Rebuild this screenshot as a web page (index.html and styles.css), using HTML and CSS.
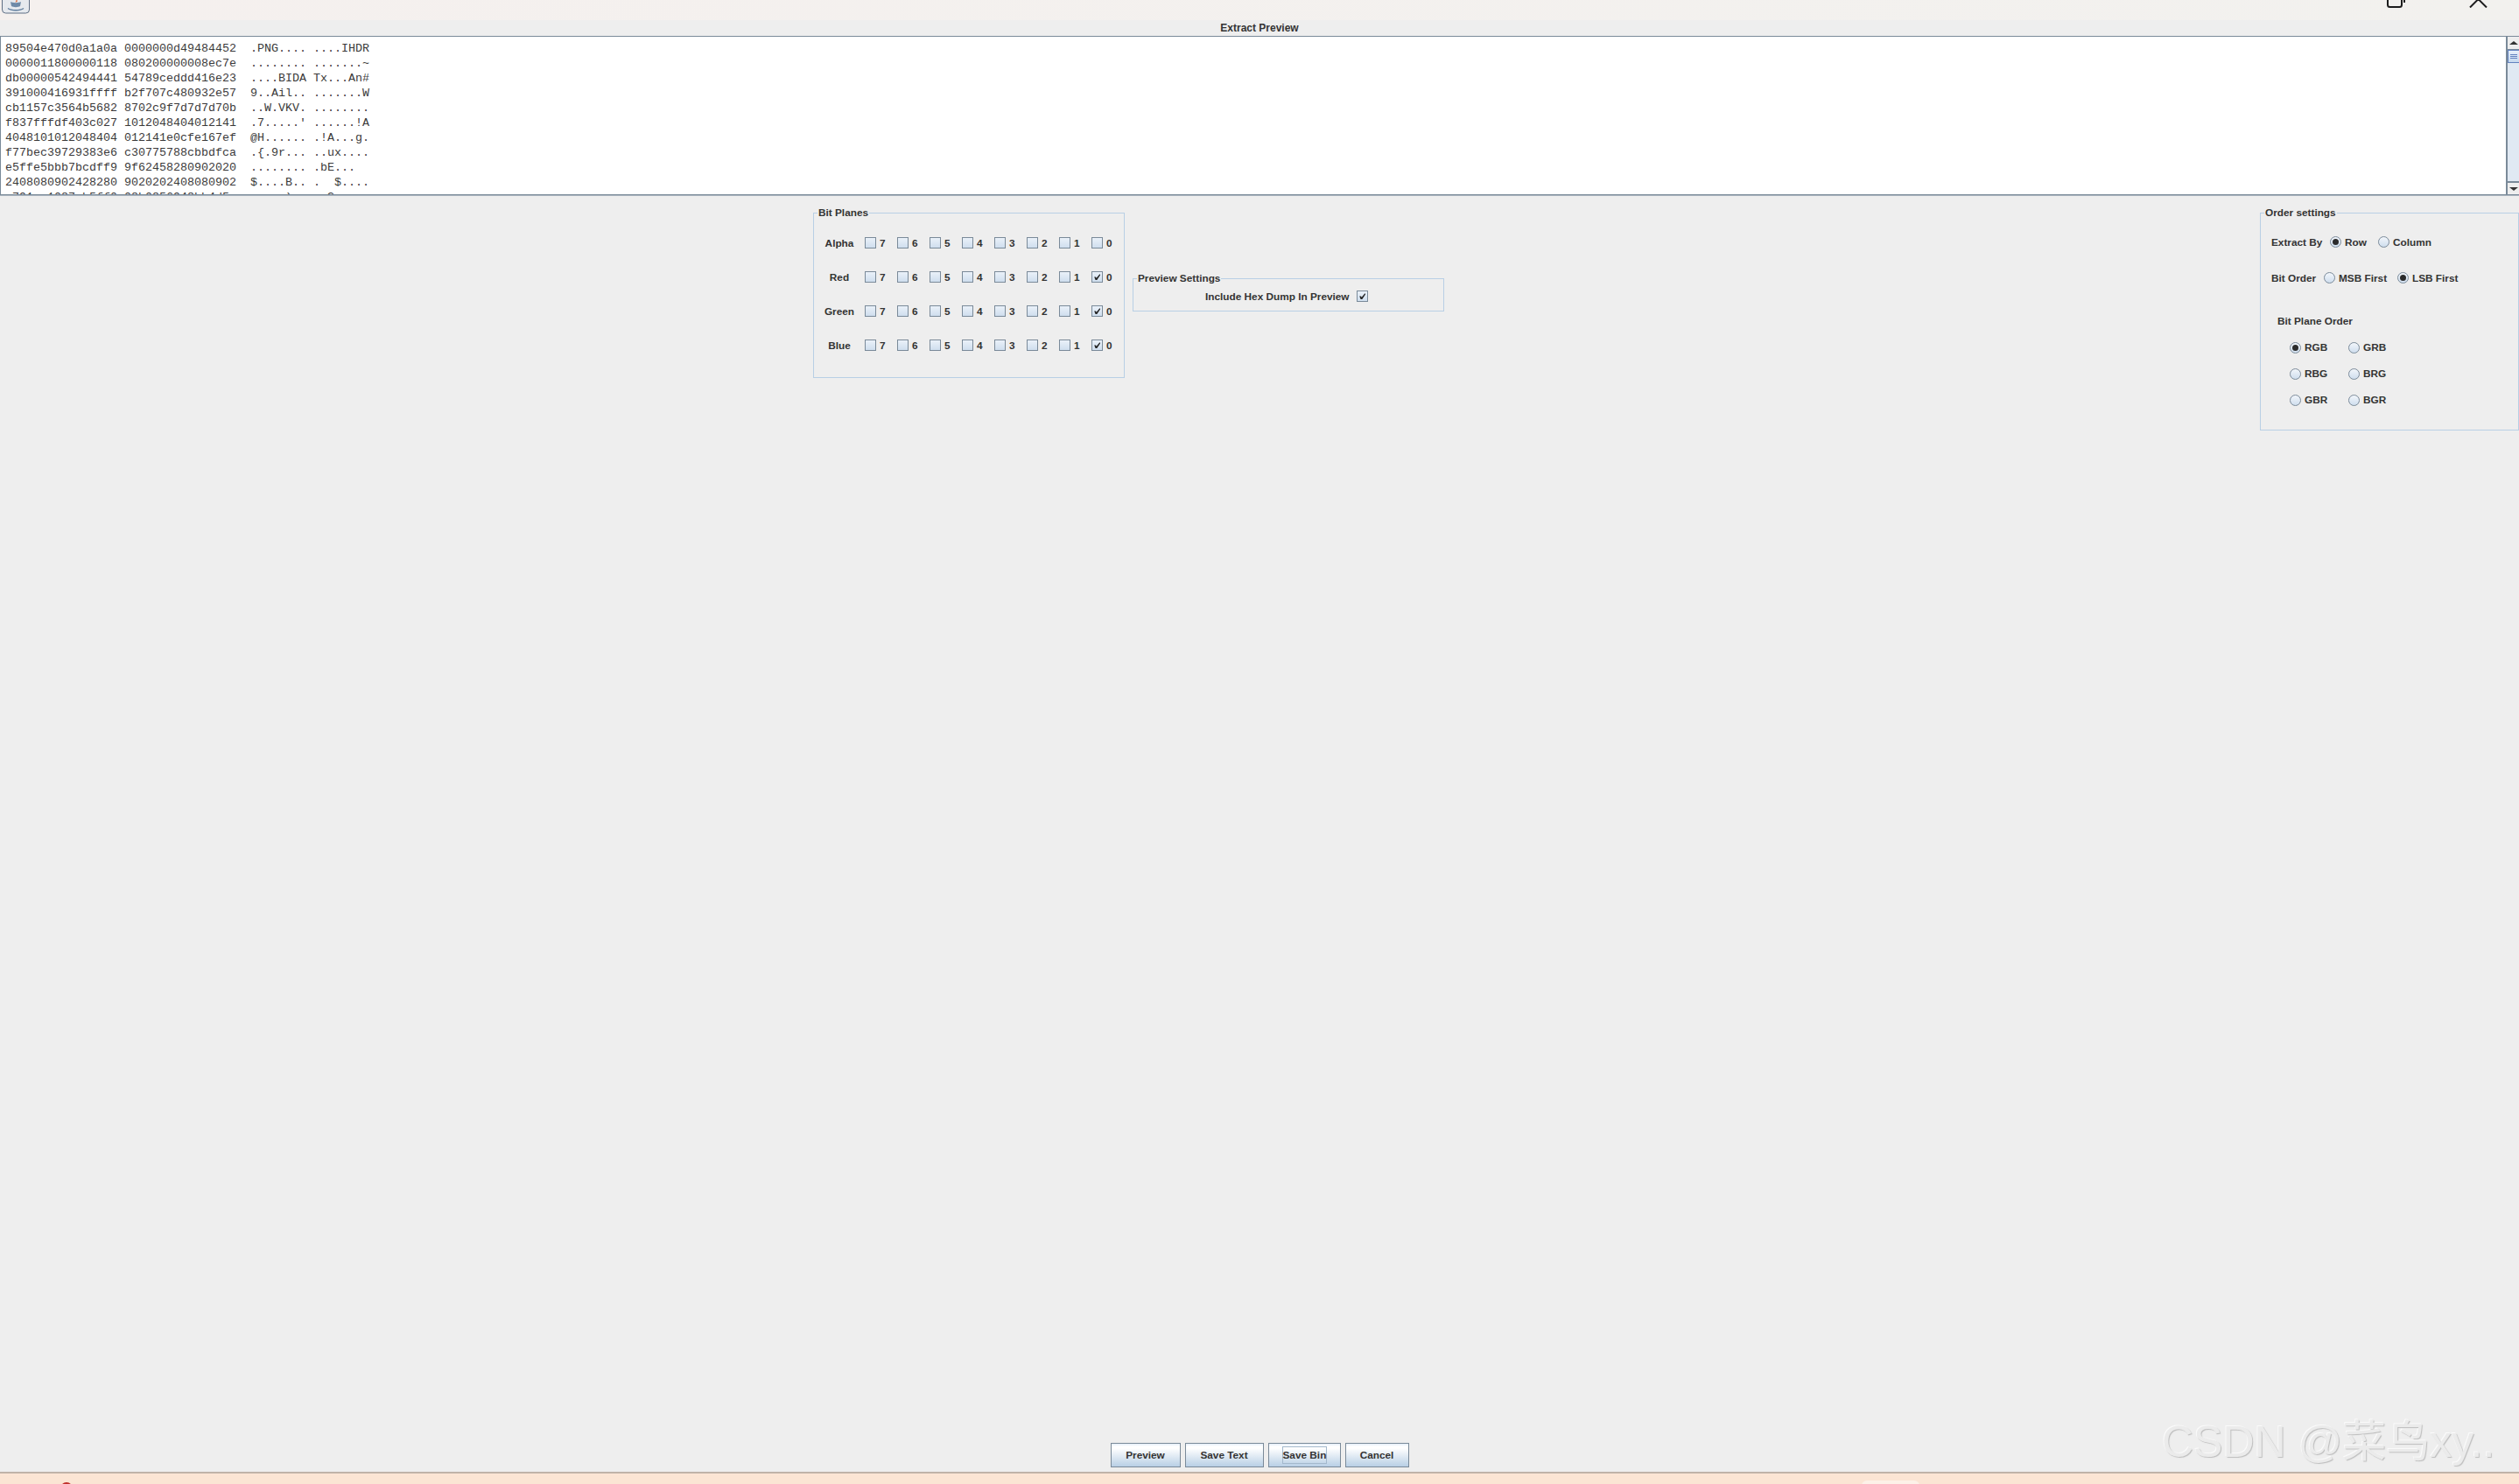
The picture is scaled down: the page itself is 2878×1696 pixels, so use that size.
FILE: index.html
```html
<!DOCTYPE html>
<html lang="en">
<head>
<meta charset="utf-8">
<title>Extract Preview</title>
<link rel="stylesheet" href="styles.css">
</head>
<body>
<svg class="defs" width="0" height="0" aria-hidden="true">
  <symbol id="tick" viewBox="0 0 13 13"><path d="M3.2 6.4 L5 6.4 L5.7 7.8 L9.2 3.6 L10 3.6 L10 4.6 L6.3 10 L4.6 10 Z" fill="#222"/></symbol>
</svg>
<div class="window">
  <header class="titlebar">
    <svg class="java-icon" width="36" height="16" viewBox="0 0 36 16">
      <rect x="2.5" y="-8" width="31" height="23" rx="4" fill="#e6e9ee" stroke="#5f6f85" stroke-width="1"/>
      <path d="M12 2 C14 3.5 22 3.5 24 2 L23 7 C21 8.5 15 8.5 13 7 Z" fill="#6f8aa8"/>
      <path d="M9 9.5 C13 12.5 23 12.5 27 9.5" fill="none" stroke="#5f7c9c" stroke-width="1.4"/>
      <path d="M19 -1 L20 1.5 L17.5 3 Z" fill="#d8693c"/>
    </svg>
    <div class="window-controls">
      <svg width="22" height="9" viewBox="0 0 22 9"><path d="M1 -4 V5.5 Q1 8 3.5 8 H14.5 Q17 8 17 5.5 V-4 M20 -4 V3" fill="none" stroke="#1c1c1c" stroke-width="2"/></svg>
      <svg class="close-icon" width="21" height="9" viewBox="0 0 21 9"><path d="M10.5 -1 L1 8.5 M10.5 -1 L20 8.5" fill="none" stroke="#1c1c1c" stroke-width="2"/></svg>
    </div>
  </header>
  <div class="caption">Extract Preview</div>
  <section class="preview">
    <pre class="dump">89504e470d0a1a0a 0000000d49484452  .PNG.... ....IHDR
0000011800000118 080200000008ec7e  ........ .......~
db00000542494441 54789ceddd416e23  ....BIDA Tx...An#
391000416931ffff b2f707c480932e57  9..Ail.. .......W
cb1157c3564b5682 8702c9f7d7d7d70b  ..W.VKV. ........
f837fffdf403c027 1012048404012141  .7.....' ......!A
4048101012048404 012141e0cfe167ef  @H...... .!A...g.
f77bec39729383e6 c30775788cbbdfca  .{.9r... ..ux....
e5ffe5bbb7bcdff9 9f62458280902020  ........ .bE...
2408080902428280 9020202408080902  $....B.. .  $....
a791ee1087cb5ff0 08b0856948bb4d5e  .....).. ..?.....</pre>
    <div class="scrollbar">
      <div class="sb-btn"><span class="arrow-up"></span></div>
      <div class="sb-thumb"><i></i><i></i><i></i></div>
      <div class="sb-track"></div>
      <div class="sb-btn sb-btn-down"><span class="arrow-down"></span></div>
    </div>
  </section>

  <main class="settings">
    <fieldset class="group bit-planes">
      <legend>Bit Planes</legend>
      <div class="plane-row"><span class="plane-name">Alpha</span>
        <span class="bit"><span class="check"></span>7</span><span class="bit"><span class="check"></span>6</span><span class="bit"><span class="check"></span>5</span><span class="bit"><span class="check"></span>4</span><span class="bit"><span class="check"></span>3</span><span class="bit"><span class="check"></span>2</span><span class="bit"><span class="check"></span>1</span><span class="bit"><span class="check"></span>0</span>
      </div>
      <div class="plane-row"><span class="plane-name">Red</span>
        <span class="bit"><span class="check"></span>7</span><span class="bit"><span class="check"></span>6</span><span class="bit"><span class="check"></span>5</span><span class="bit"><span class="check"></span>4</span><span class="bit"><span class="check"></span>3</span><span class="bit"><span class="check"></span>2</span><span class="bit"><span class="check"></span>1</span><span class="bit"><span class="check"><svg><use href="#tick"/></svg></span>0</span>
      </div>
      <div class="plane-row"><span class="plane-name">Green</span>
        <span class="bit"><span class="check"></span>7</span><span class="bit"><span class="check"></span>6</span><span class="bit"><span class="check"></span>5</span><span class="bit"><span class="check"></span>4</span><span class="bit"><span class="check"></span>3</span><span class="bit"><span class="check"></span>2</span><span class="bit"><span class="check"></span>1</span><span class="bit"><span class="check"><svg><use href="#tick"/></svg></span>0</span>
      </div>
      <div class="plane-row"><span class="plane-name">Blue</span>
        <span class="bit"><span class="check"></span>7</span><span class="bit"><span class="check"></span>6</span><span class="bit"><span class="check"></span>5</span><span class="bit"><span class="check"></span>4</span><span class="bit"><span class="check"></span>3</span><span class="bit"><span class="check"></span>2</span><span class="bit"><span class="check"></span>1</span><span class="bit"><span class="check"><svg><use href="#tick"/></svg></span>0</span>
      </div>
    </fieldset>

    <fieldset class="group preview-settings">
      <legend>Preview Settings</legend>
      <div class="hex-row">Include Hex Dump In Preview<span class="check"><svg><use href="#tick"/></svg></span></div>
    </fieldset>

    <fieldset class="group order-settings">
      <legend>Order settings</legend>
      <div class="order-body">
        <div class="order-row extract-row">
          <span class="order-label">Extract By</span>
          <span class="opt opt-row"><span class="radio on"></span>Row</span>
          <span class="opt"><span class="radio"></span>Column</span>
        </div>
        <div class="order-row bitorder-row">
          <span class="order-label">Bit Order</span>
          <span class="opt opt-msb"><span class="radio"></span>MSB First</span>
          <span class="opt"><span class="radio on"></span>LSB First</span>
        </div>
        <div class="plane-order-title">Bit Plane Order</div>
        <div class="plane-order-grid">
          <span class="opt"><span class="radio on"></span>RGB</span>
          <span class="opt"><span class="radio"></span>GRB</span>
          <span class="opt"><span class="radio"></span>RBG</span>
          <span class="opt"><span class="radio"></span>BRG</span>
          <span class="opt"><span class="radio"></span>GBR</span>
          <span class="opt"><span class="radio"></span>BGR</span>
        </div>
      </div>
    </fieldset>
  </main>

  <footer class="actions">
    <button class="btn btn-preview">Preview</button>
    <button class="btn btn-text">Save Text</button>
    <button class="btn btn-bin"><span class="focus">Save Bin</span></button>
    <button class="btn btn-cancel">Cancel</button>
    <div class="watermark">CSDN @菜鸟xy..</div>
  </footer>
  <div class="taskbar">
    <span class="red-dot"></span>
    <span class="pill"></span>
  </div>
</div>
</body>
</html>
```
FILE: styles.css
```css
* { box-sizing: border-box; }
html, body { margin: 0; height: 100%; overflow: hidden; }
body { background: #eeeeee; color: #333; font: bold 11.8px "Liberation Sans", Arial, sans-serif; }
.defs { position: absolute; }
.window { display: flex; flex-direction: column; height: 1696px; width: 2878px; }

.titlebar { height: 23px; flex: none; background: linear-gradient(90deg, #f5f0ee, #f2f1ee); display: flex; justify-content: space-between; align-items: flex-start; overflow: hidden; }
.java-icon { display: block; }
.window-controls { display: flex; align-items: flex-start; gap: 72px; padding-right: 36px; }
.window-controls svg { display: block; }

.caption { height: 18px; flex: none; text-align: center; line-height: 18px; font-size: 12px; background: #eeeeee; }

.preview { height: 182px; flex: none; display: flex; border-top: 1px solid #7a8a99; border-bottom: 1px solid #7a8a99; box-shadow: 0 1px 0 #aab4be; background: #fff; border-left: 1px solid #7a8a99; overflow: hidden; }
.dump { flex: 1; margin: 0; padding: 5px 0 0 5px; font: 13.33px/17px "Liberation Mono", "Courier New", monospace; color: #3a3a3a; overflow: hidden; white-space: pre; }
.scrollbar { width: 15px; flex: none; display: flex; flex-direction: column; background: #e0e9f3; border-left: 2px solid #7a8a99; }
.sb-btn { height: 15px; flex: none; background: #eeeeee; display: flex; align-items: center; justify-content: center; border-bottom: 1px solid #7a8a99; }
.sb-btn-down { border-bottom: 0; border-top: 2px solid #7a8a99; }
.arrow-up { border: 4px solid transparent; border-top: 0; border-bottom: 4px solid #333; border-left-width: 5px; border-right-width: 5px; }
.arrow-down { border: 4px solid transparent; border-bottom: 0; border-top: 4px solid #333; border-left-width: 5px; border-right-width: 5px; }
.sb-thumb { height: 15px; flex: none; background: linear-gradient(#e6effa, #c5d9ef); border: 1px solid #6382bf; border-right: 0; display: flex; flex-direction: column; justify-content: center; gap: 1px; padding: 0 2px; }
.sb-thumb i { height: 1px; background: #6382bf; display: block; }
.sb-track { flex: 1; }

.settings { flex: 1; display: flex; align-items: flex-start; padding-top: 13px; position: relative; }
.group { margin: 0; padding: 0; border: 1px solid #b8cfe5; min-width: 0; }
.group legend { padding: 0 1px; margin-left: 4px; line-height: 14px; height: 14px; }

.bit-planes { margin-left: 929px; width: 356px; height: 196px; padding: 8px 0 0 0; }
.plane-row { display: flex; align-items: center; height: 39px; }
.plane-name { width: 58px; text-align: center; }
.bit { width: 37px; display: flex; align-items: center; gap: 4px; }
.check { width: 13px; height: 13px; flex: none; display: block; border: 1px solid #7a8a99; background: linear-gradient(#eaf1f9, #cfdeee); position: relative; }
.check svg { position: absolute; left: -1px; top: -1px; width: 13px; height: 13px; display: block; }

.preview-settings { margin-left: 9px; margin-top: 75px; width: 356px; height: 45px; }
.hex-row { display: flex; align-items: center; height: 27px; padding-left: 82px; gap: 8px; }

.order-settings { margin-left: auto; width: 296px; height: 256px; }
.order-body { padding-left: 12px; }
.order-row { display: flex; align-items: center; }
.extract-row { height: 41px; margin-top: 6px; }
.bitorder-row { height: 41px; }
.order-label { width: 67px; }
.bitorder-row .order-label { width: 60px; }
.opt { display: flex; align-items: center; gap: 4px; }
.opt-row { width: 55px; }
.opt-msb { width: 84px; }
.radio { width: 13px; height: 13px; flex: none; border: 1px solid #7a8a99; border-radius: 50%; background: linear-gradient(#f2f6fb, #cfdeee); display: flex; align-items: center; justify-content: center; }
.radio.on::after { content: ""; width: 7px; height: 7px; border-radius: 50%; background: #2b2b2b; }
.plane-order-title { margin: 22px 0 0 7px; line-height: 14px; }
.plane-order-grid { display: grid; grid-template-columns: 67px 67px; grid-auto-rows: 30px; margin: 8px 0 0 21px; }

.actions { height: 38px; flex: none; display: flex; justify-content: center; gap: 5px; padding-top: 5px; position: relative; }
.btn { height: 28px; padding: 0; font: inherit; color: #333; border: 1px solid #7a8a99; background: linear-gradient(#e4eef9 0, #fff 12%, #ffffff 20%, #b8cfe5 100%); }
.btn-preview { width: 80px; }
.btn-text { width: 90px; }
.btn-bin { width: 83px; }
.btn-cancel { width: 73px; }
.focus { display: inline-block; width: 51px; height: 20px; line-height: 18px; border: 1px solid #a3b8cc; white-space: nowrap; }

.watermark { position: absolute; left: 2470px; top: -26px; font: 400 50px/60px "Liberation Sans", "Noto Sans CJK SC", sans-serif; color: #ebebeb; white-space: nowrap; text-shadow: 1px 1px 1px #bdbdbd, -1px -1px 0 #fafafa; }

.taskbar { height: 14px; flex: none; background: #fbe5d4; border-top: 2px solid #bfb3a8; position: relative; overflow: hidden; }
.red-dot { position: absolute; left: 69px; top: 10px; width: 14px; height: 14px; border-radius: 50%; background: #c0302c; }
.pill { position: absolute; left: 2127px; top: 8px; width: 66px; height: 20px; border-radius: 6px; background: #fdf1e8; }
```
